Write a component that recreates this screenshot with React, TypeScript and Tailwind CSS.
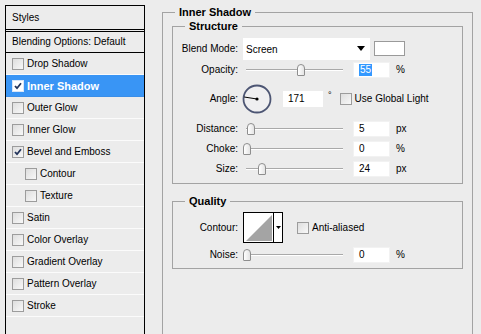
import type { ReactNode } from "react";

const FONT = "font-['Liberation_Sans','Arial',sans-serif]";

function CheckBox({ checked = false, light = false }: { checked?: boolean; light?: boolean }) {
  return (
    <span
      className={`flex h-[12px] w-[12px] shrink-0 items-center justify-center border ${
        light ? "border-[#d8e6f8] bg-white" : "border-[#9c9c9c] bg-gradient-to-br from-[#dedede] to-[#f8f8f8]"
      }`}
    >
      {checked ? (
        <svg width="8" height="8" viewBox="0 0 8 8">
          <path d="M1 4 L3 6.2 L7 1.2" fill="none" stroke="#22335a" strokeWidth="1.8" />
        </svg>
      ) : null}
    </span>
  );
}

type StyleRow = { label: string; checked?: boolean; active?: boolean; indent?: boolean };

const styleRows: StyleRow[] = [
  { label: "Drop Shadow" },
  { label: "Inner Shadow", checked: true, active: true },
  { label: "Outer Glow" },
  { label: "Inner Glow" },
  { label: "Bevel and Emboss", checked: true },
  { label: "Contour", indent: true },
  { label: "Texture", indent: true },
  { label: "Satin" },
  { label: "Color Overlay" },
  { label: "Gradient Overlay" },
  { label: "Pattern Overlay" },
  { label: "Stroke" },
];

function Slider({ at }: { at: number }) {
  // at = thumb's left edge, measured from the slider's start
  return (
    <div className="relative h-[14px] w-[105px] shrink-0">
      <div className="absolute left-[4px] right-[4px] top-[6px] h-[2px] border-t border-[#a9a9a9] border-b border-b-white" />
      <div
        className="absolute top-[1px] h-[12px] w-[8px] rounded-t-[4px] rounded-b-[1px] border border-[#8e8e8e] bg-gradient-to-r from-white to-[#e4e4e4]"
        style={{ left: at }}
      />
    </div>
  );
}

function NumBox({ children }: { children: ReactNode }) {
  return (
    <div className="ml-[6px] flex h-[16px] w-[37px] shrink-0 items-center border border-[#f2f2f2] bg-white pl-[5px]">
      {children}
    </div>
  );
}

function Label({ children }: { children: ReactNode }) {
  return <div className="w-[65px] shrink-0 text-right">{children}</div>;
}

function SliderRow({ label, at, value, unit, className }: { label: string; at: number; value: ReactNode; unit: string; className: string }) {
  return (
    <div className={`flex h-[18px] items-center ${className}`}>
      <Label>{label}</Label>
      <div className="ml-[4px]">
        <Slider at={at} />
      </div>
      <NumBox>{value}</NumBox>
      <span className="ml-[6px]">{unit}</span>
    </div>
  );
}

function Title({ children, className }: { children: ReactNode; className: string }) {
  return (
    <div className={`-mt-[7px] h-[13px] w-fit bg-[#ececec] px-[4px] text-[11px] font-bold leading-[13px] ${className}`}>
      {children}
    </div>
  );
}

export default function App() {
  return (
    <div className={`flex h-[334px] w-[481px] overflow-hidden bg-[#ececec] text-[10px] leading-[12px] text-black ${FONT}`}>
      <div className="ml-[5px] mt-[5px] flex h-[340px] w-[140px] shrink-0 flex-col border-x border-t border-black">
        <div className="flex h-[26px] items-center border-b-[3px] border-double border-black pl-[6px]">Styles</div>
        <div className="flex h-[21px] items-center border-b border-black pl-[6px]">Blending Options: Default</div>
        {styleRows.map((row) => (
          <div
            key={row.label}
            className={`flex h-[22px] items-center gap-[3px] border-b ${
              row.active ? "border-[#3a8ee8] bg-[#3995f5] text-[11px] font-bold text-white" : "border-[#fbfbfb]"
            } ${row.indent ? "pl-[19px]" : "pl-[6px]"}`}
          >
            <CheckBox checked={row.checked} light={row.active} />
            <span>{row.label}</span>
          </div>
        ))}
      </div>

      <div className="ml-[17px] mt-[12px] h-[330px] w-[311px] shrink-0 border border-[#a3a3a3] px-[9px]">
        <Title className="ml-[3px]">Inner Shadow</Title>

        <div className="mt-[7px] border border-[#a3a3a3] pb-[5px]">
          <Title className="ml-[12px]">Structure</Title>
          <div className="mt-[4px] flex h-[23px] items-center">
            <Label>Blend Mode:</Label>
            <div className="ml-[5px] flex h-[22px] w-[127px] shrink-0 items-center justify-between bg-white pl-[3px] pr-[5px]">
              <span className="mt-[2px]">Screen</span>
              <svg width="8" height="5" viewBox="0 0 8 5">
                <path d="M0 0 H8 L4 5 Z" fill="#000" />
              </svg>
            </div>
            <div className="ml-[4px] h-[15px] w-[31px] border border-[#9a9a9a] bg-white" />
          </div>

          <div className="mt-[1px] flex h-[18px] items-center">
            <Label>Opacity:</Label>
            <div className="ml-[4px]">
              <Slider at={55} />
            </div>
            <NumBox>
              <span className="bg-[#3399ff] px-[1px] text-white">55</span>
            </NumBox>
            <span className="ml-[6px]">%</span>
          </div>

          <div className="mt-[5px] flex h-[29px] items-center">
            <Label>Angle:</Label>
            <svg className="ml-[4px] shrink-0" width="30" height="30" viewBox="0 0 30 30">
              <circle cx="15" cy="15" r="13.5" fill="#efeff1" stroke="#4c5573" strokeWidth="1.8" />
              <line x1="15" y1="15" x2="2.2" y2="13" stroke="#000" strokeWidth="1" />
              <circle cx="15" cy="15" r="1.6" fill="#000" />
            </svg>
            <div className="ml-[11px] flex h-[16px] w-[40px] shrink-0 items-center bg-white pl-[5px]">171</div>
            <span className="mb-[8px] ml-[5px] text-[9px]">°</span>
            <div className="ml-[8px] flex items-center gap-[3px]">
              <CheckBox />
              <span>Use Global Light</span>
            </div>
          </div>

          <SliderRow label="Distance:" at={5} value="5" unit="px" className="mt-[7px]" />
          <SliderRow label="Choke:" at={1} value="0" unit="%" className="mt-[2px]" />
          <SliderRow label="Size:" at={16} value="24" unit="px" className="mt-[2px]" />
        </div>

        <div className="mt-[17px] border border-[#a3a3a3] pb-[4px]">
          <Title className="ml-[12px]">Quality</Title>
          <div className="mt-[4px] flex h-[31px] items-center">
            <Label>Contour:</Label>
            <div className="ml-[5px] flex h-[31px] w-[40px] shrink-0 border border-black bg-white">
              <svg width="29" height="29" viewBox="0 0 29 29">
                <polygon points="2,28 28,2 28,28" fill="#a4a4a4" />
              </svg>
              <div className="flex flex-1 items-center justify-center border-l border-black">
                <svg width="5" height="3" viewBox="0 0 5 3">
                  <path d="M0 0 H5 L2.5 3 Z" fill="#000" />
                </svg>
              </div>
            </div>
            <div className="ml-[14px] flex items-center gap-[3px]">
              <CheckBox />
              <span>Anti-aliased</span>
            </div>
          </div>
          <SliderRow label="Noise:" at={1} value="0" unit="%" className="mt-[3px]" />
        </div>
      </div>
    </div>
  );
}
